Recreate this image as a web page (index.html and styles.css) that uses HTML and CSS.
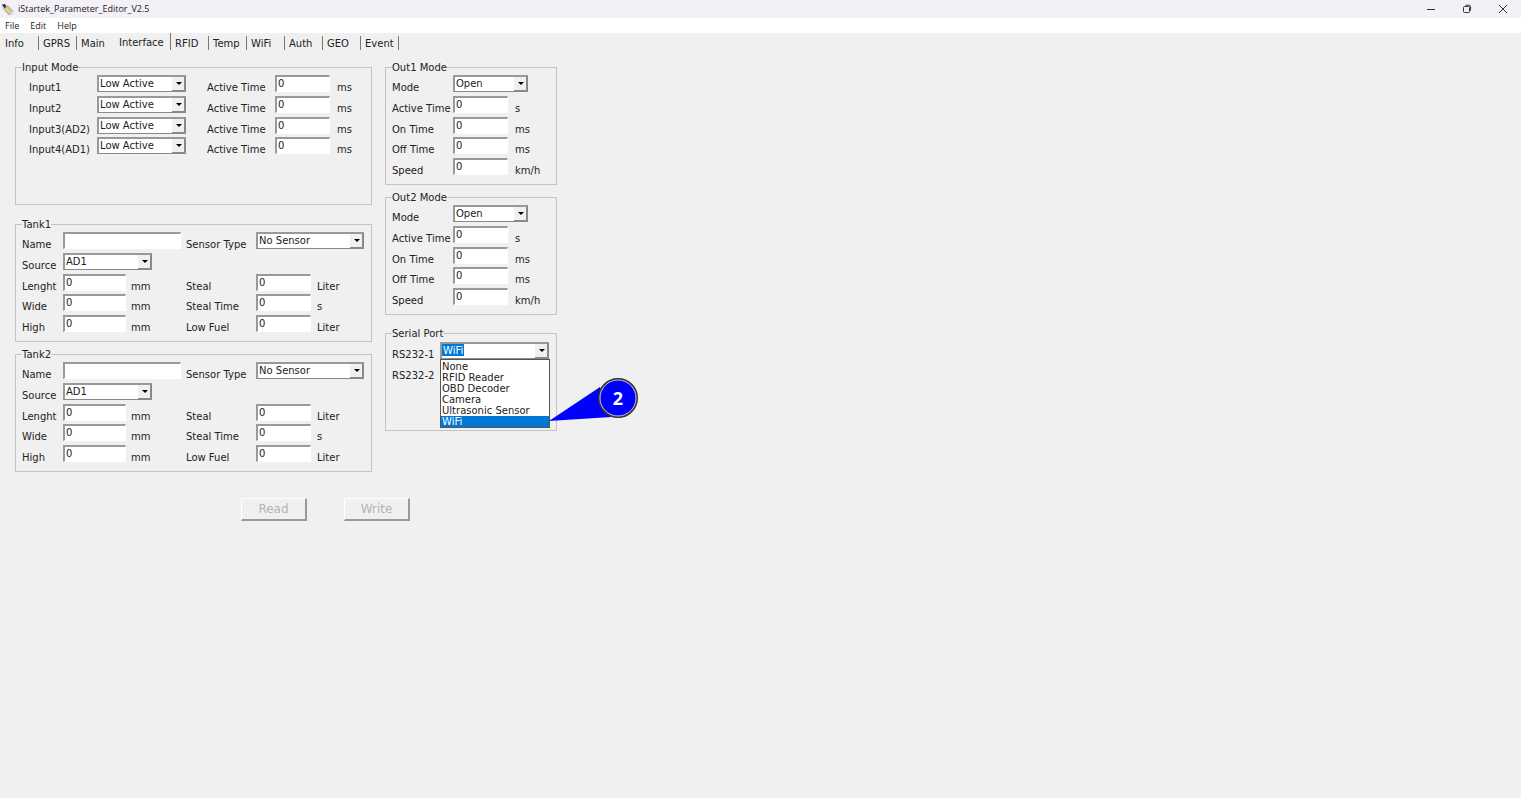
FILE: index.html
```
<!DOCTYPE html>
<html lang="en">
<head>
<meta charset="utf-8">
<title>iStartek_Parameter_Editor_V2.5</title>
<link rel="stylesheet" href="styles.css">
</head>
<body>
<header class="titlebar">
  <svg class="app-icon" viewBox="0 0 14 14" aria-hidden="true">
    <path d="M1 1h5l7 7v5H8L1 6z" fill="#dcdce4"/>
    <path d="M1 2l3-1 2 3-2 2z" fill="#333"/>
    <path d="M4 5l3-1 5 6-3 2z" fill="#d8bd5c"/>
    <path d="M3 6l6 7M7 3l6 6" stroke="#99979c" stroke-width="1" fill="none"/>
    <path d="M6 6l4 5" stroke="#fff3b4" stroke-width="1"/>
  </svg>
  <h1 class="app-title">iStartek_Parameter_Editor_V2.5</h1>
  <div class="window-controls">
    <button type="button" aria-label="Minimize"><svg viewBox="0 0 10 10"><path d="M1 5.5h8"/></svg></button>
    <button type="button" aria-label="Restore"><svg viewBox="0 0 10 10"><rect x="1.5" y="2.5" width="6" height="6" rx="1"/><path d="M3.5 1.2h3.500q1.500 0 1.500 1.500v4"/></svg></button>
    <button type="button" aria-label="Close"><svg viewBox="0 0 10 10"><path d="M1 1l8 8M9 1l-8 8"/></svg></button>
  </div>
</header>
<nav class="menubar">
  <button type="button">File</button>
  <button type="button">Edit</button>
  <button type="button">Help</button>
</nav>
<div class="tabs" role="tablist">
  <button type="button" role="tab">Info</button>
  <button type="button" role="tab">GPRS</button>
  <button type="button" role="tab" class="before-active">Main</button>
  <button type="button" role="tab" class="active" aria-selected="true">Interface</button>
  <button type="button" role="tab">RFID</button>
  <button type="button" role="tab">Temp</button>
  <button type="button" role="tab">WiFi</button>
  <button type="button" role="tab">Auth</button>
  <button type="button" role="tab">GEO</button>
  <button type="button" role="tab">Event</button>
</div>
<main class="panel">
  <div class="columns">
    <div class="column">
      <fieldset class="group inputs">
        <legend>Input Mode</legend>
        <div class="rows input-rows">
          <label for="in1">Input1</label><select id="in1" class="w-combo"><option>Low Active</option></select>
          <label for="at1">Active Time</label><input id="at1" type="text" class="w-num" value="0"><span class="unit">ms</span>
          <label for="in2">Input2</label><select id="in2" class="w-combo"><option>Low Active</option></select>
          <label for="at2">Active Time</label><input id="at2" type="text" class="w-num" value="0"><span class="unit">ms</span>
          <label for="in3">Input3(AD2)</label><select id="in3" class="w-combo"><option>Low Active</option></select>
          <label for="at3">Active Time</label><input id="at3" type="text" class="w-num" value="0"><span class="unit">ms</span>
          <label for="in4">Input4(AD1)</label><select id="in4" class="w-combo"><option>Low Active</option></select>
          <label for="at4">Active Time</label><input id="at4" type="text" class="w-num" value="0"><span class="unit">ms</span>
        </div>
      </fieldset>
      <fieldset class="group tank tank-first">
        <legend>Tank1</legend>
        <div class="rows tank-rows">
          <label for="t1name">Name</label><input id="t1name" type="text" class="w-name">
          <label for="t1type">Sensor Type</label><select id="t1type" class="w-sensor"><option>No Sensor</option></select>
          <label for="t1src">Source</label><select id="t1src" class="w-source"><option>AD1</option></select>
          <label for="t1len">Lenght</label><input id="t1len" type="text" class="w-size" value="0"><span class="unit">mm</span>
          <label for="t1steal">Steal</label><input id="t1steal" type="text" class="w-num" value="0"><span class="unit">Liter</span>
          <label for="t1wide">Wide</label><input id="t1wide" type="text" class="w-size" value="0"><span class="unit">mm</span>
          <label for="t1time">Steal Time</label><input id="t1time" type="text" class="w-num" value="0"><span class="unit">s</span>
          <label for="t1high">High</label><input id="t1high" type="text" class="w-size" value="0"><span class="unit">mm</span>
          <label for="t1low">Low Fuel</label><input id="t1low" type="text" class="w-num" value="0"><span class="unit">Liter</span>
        </div>
      </fieldset>
      <fieldset class="group tank">
        <legend>Tank2</legend>
        <div class="rows tank-rows">
          <label for="t2name">Name</label><input id="t2name" type="text" class="w-name">
          <label for="t2type">Sensor Type</label><select id="t2type" class="w-sensor"><option>No Sensor</option></select>
          <label for="t2src">Source</label><select id="t2src" class="w-source"><option>AD1</option></select>
          <label for="t2len">Lenght</label><input id="t2len" type="text" class="w-size" value="0"><span class="unit">mm</span>
          <label for="t2steal">Steal</label><input id="t2steal" type="text" class="w-num" value="0"><span class="unit">Liter</span>
          <label for="t2wide">Wide</label><input id="t2wide" type="text" class="w-size" value="0"><span class="unit">mm</span>
          <label for="t2time">Steal Time</label><input id="t2time" type="text" class="w-num" value="0"><span class="unit">s</span>
          <label for="t2high">High</label><input id="t2high" type="text" class="w-size" value="0"><span class="unit">mm</span>
          <label for="t2low">Low Fuel</label><input id="t2low" type="text" class="w-num" value="0"><span class="unit">Liter</span>
        </div>
      </fieldset>
    </div>
    <div class="column">
      <fieldset class="group">
        <legend>Out1 Mode</legend>
        <div class="rows out-rows">
          <label for="o1mode">Mode</label><select id="o1mode" class="w-mode"><option>Open</option></select>
          <label for="o1act">Active Time</label><input id="o1act" type="text" class="w-num" value="0"><span class="unit">s</span>
          <label for="o1on">On Time</label><input id="o1on" type="text" class="w-num" value="0"><span class="unit">ms</span>
          <label for="o1off">Off Time</label><input id="o1off" type="text" class="w-num" value="0"><span class="unit">ms</span>
          <label for="o1spd">Speed</label><input id="o1spd" type="text" class="w-num" value="0"><span class="unit">km/h</span>
        </div>
      </fieldset>
      <fieldset class="group">
        <legend>Out2 Mode</legend>
        <div class="rows out-rows">
          <label for="o2mode">Mode</label><select id="o2mode" class="w-mode"><option>Open</option></select>
          <label for="o2act">Active Time</label><input id="o2act" type="text" class="w-num" value="0"><span class="unit">s</span>
          <label for="o2on">On Time</label><input id="o2on" type="text" class="w-num" value="0"><span class="unit">ms</span>
          <label for="o2off">Off Time</label><input id="o2off" type="text" class="w-num" value="0"><span class="unit">ms</span>
          <label for="o2spd">Speed</label><input id="o2spd" type="text" class="w-num" value="0"><span class="unit">km/h</span>
        </div>
      </fieldset>
      <fieldset class="group serial">
        <legend>Serial Port</legend>
        <div class="rows serial-rows">
          <label for="rs1">RS232-1</label>
          <div class="open-combo">
            <select id="rs1" class="w-port highlighted"><option>WiFi</option></select>
            <ul class="options" role="listbox" aria-label="RS232-1">
              <li role="option">None</li>
              <li role="option">RFID Reader</li>
              <li role="option">OBD Decoder</li>
              <li role="option">Camera</li>
              <li role="option">Ultrasonic Sensor</li>
              <li role="option" class="chosen" aria-selected="true">WiFi</li>
            </ul>
            <div class="callout">
              <svg viewBox="0 0 90 46" aria-hidden="true">
                <path d="M0 44L51 10L62 40z" fill="#00f"/>
                <circle cx="69" cy="21" r="19" fill="#00f" stroke="#333" stroke-width="2"/>
                <circle cx="69" cy="21" r="18" fill="none" stroke="#c8c8dc" stroke-width="1"/>
              </svg>
              <span class="callout-number">2</span>
            </div>
          </div>
          <span class="unit">RS232-2</span>
        </div>
      </fieldset>
    </div>
  </div>
  <div class="actions">
    <button type="button" disabled>Read</button>
    <button type="button" disabled>Write</button>
  </div>
</main>
</body>
</html>
```
FILE: styles.css
```
* { box-sizing: border-box; }

body {
  margin: 0;
  min-height: 100vh;
  background: #f0f0f0;
  color: #222;
  font: 10px/12px "DejaVu Sans", Verdana, sans-serif;
}

button, input, select { font: inherit; color: inherit; border-radius: 0; }

button { border: 0; padding: 0; background: none; }

.titlebar {
  display: flex;
  align-items: center;
  height: 18px;
  background: #f3f0f7;
  font-family: "Open Sans", "Noto Sans", sans-serif;
}

.app-icon { width: 13px; height: 13px; margin: 0 4px 0 1px; }

.app-title { margin: 0; font-size: 9px; font-weight: 400; }

.window-controls { display: flex; margin-left: auto; }

.window-controls button {
  display: grid;
  place-items: center;
  width: 36px;
  height: 16px;
}

.window-controls svg {
  width: 10px;
  height: 10px;
  fill: none;
  stroke: #333;
}

.menubar {
  display: flex;
  gap: 11px;
  height: 15px;
  padding-left: 5px;
  background: #fff;
  font: 9px/15px "Open Sans", "Noto Sans", sans-serif;
}

.tabs { display: flex; align-items: flex-end; height: 18px; border-bottom: 1px solid #f3f3f3; }

.tabs button {
  min-width: 38px;
  height: 14px;
  padding: 2px 0 0 4px;
  border-right: 1px solid #777;
  text-align: left;
}

.tabs button:first-child { width: 39px; padding-left: 5px; }

.tabs .before-active { border-right-color: transparent; }

.tabs .active {
  width: 56px;
  height: 17px;
}

.panel { padding: 10px 15px; }

.columns { display: flex; gap: 13px; }

.column { display: flex; flex-direction: column; gap: 6px; }

.group {
  min-width: 0;
  min-height: 124px;
  margin: 0;
  padding: 1px 6px 0;
  border: 1px solid #c4c4c4;
}

.group legend { padding: 1px 0 0; line-height: 12px; }

.inputs { min-height: 144px; }

.tank-first { margin-top: 7px; }

.serial { min-height: 104px; margin-top: 6px; padding-top: 2px; }

.rows {
  display: grid;
  grid-template-rows: 21px 21px 20px 21px;
  grid-auto-rows: 21px;
  align-items: start;
}

.rows label, .unit { padding-top: 7px; white-space: nowrap; }

.input-rows { grid-template-columns: 68px 110px 68px 62px 28px; padding-left: 7px; }

.tank-rows { grid-template-columns: 41px 68px 55px 70px 61px 48px; }

.out-rows { grid-template-columns: 61px 62px 35px; }

.serial-rows { grid-template: 21px 21px / 48px 110px; }

input, select {
  height: 17px;
  margin: 0;
  padding: 0 0 2px 1px;
  border: 1px solid #fff;
  border-top: 2px solid #999;
  border-left: 2px solid #999;
  background-color: #fff;
  line-height: 12px;
}

select {
  appearance: none;
  padding-bottom: 1px;
  border-right: 1px solid #888;
  border-bottom-color: #888;
  background-image: url("data:image/svg+xml,%3Csvg xmlns='http://www.w3.org/2000/svg' width='13' height='14'%3E%3Cpath fill='%23f0f0f0' d='M0 0h13v14H0z'/%3E%3Cpath fill='none' stroke='%23888' d='M12.500 0v13.500H0'/%3E%3Cpath d='M4 5h6L7 8z'/%3E%3C/svg%3E");
  background-repeat: no-repeat;
  background-position: right top;
}

.w-combo { width: 89px; }
.w-num { width: 55px; }
.w-size { width: 63px; }
.w-name { width: 118px; grid-column: span 2; }
.w-sensor { width: 108px; grid-column: span 2; }
.w-source { width: 89px; }
.w-mode { width: 75px; grid-column: span 2; }
.w-port { width: 109px; }

.tank-rows .w-source { grid-column: 2 / -1; }

.open-combo { position: relative; height: 17px; }

.open-combo select { display: block; }

.highlighted {
  color: #fff;
  background-image:
    url("data:image/svg+xml,%3Csvg xmlns='http://www.w3.org/2000/svg' width='13' height='14'%3E%3Cpath fill='%23f0f0f0' d='M0 0h13v14H0z'/%3E%3Cpath fill='none' stroke='%23888' d='M12.500 0v13.500H0'/%3E%3Cpath d='M4 5h6L7 8z'/%3E%3C/svg%3E"),
    linear-gradient(#0078d7, #0078d7);
  background-size: auto, 22px 12px;
  background-position: right top, left top;
}

.options {
  position: absolute;
  top: 17px;
  left: 0;
  width: 110px;
  margin: 0;
  padding: 1px 0 0;
  border: 1px solid #555;
  background: #fff;
  list-style: none;
  line-height: 11px;
}

.options li { padding-left: 1px; }

.options .chosen { background: #0078d7; color: #fff; }

.callout {
  position: absolute;
  top: 35px;
  left: 109px;
  width: 90px;
  height: 46px;
}

.callout svg { display: block; }

.callout-number {
  position: absolute;
  top: 10px;
  left: 50px;
  width: 38px;
  color: #fff;
  font: bold 18px/22px "Open Sans", "Noto Sans", sans-serif;
  text-align: center;
}

.actions {
  display: flex;
  gap: 37px;
  padding: 26px 0 0 226px;
}

.actions button {
  width: 66px;
  height: 23px;
  border: 1px solid #fff;
  border-right: 2px solid #999;
  border-bottom: 2px solid #999;
  color: #b4b4b4;
  font-size: 12px;
}
```
